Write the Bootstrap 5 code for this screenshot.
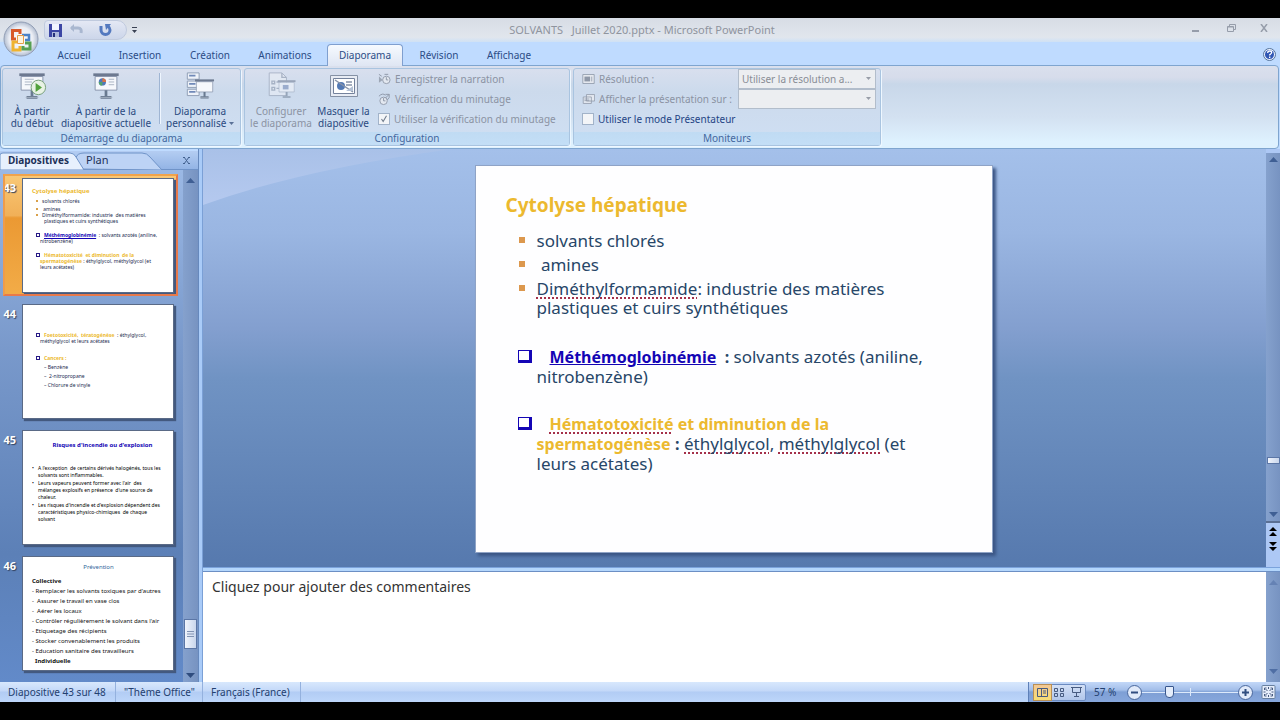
<!DOCTYPE html>
<html lang="fr">
<head>
<meta charset="utf-8">
<meta name="viewport" content="width=device-width, initial-scale=1">
<title>SOLVANTS Juillet 2020.pptx - Microsoft PowerPoint</title>
<link href="https://cdn.jsdelivr.net/npm/bootstrap@5.3.0/dist/css/bootstrap.min.css" rel="stylesheet">
<style>
  :root { --ink: #2a4a80; --dim: #8b93a3; --line: #86a9d3; }
  body { background: #000; font: 10px/12px "Noto Sans", "Open Sans", sans-serif; color: var(--ink); padding: 18px 0; overflow: hidden; }
  button { font: inherit; color: inherit; background: none; border: 0; padding: 0; }
  svg { display: block; flex: none; }
  a { color: inherit; text-decoration: none; }
  ul { list-style: none; margin: 0; padding: 0; }

  /* window frame */
  .window { background: #bfdbff; min-height: 0; }
  .titlebar { height: 24px; background: linear-gradient(#d7dce5, #e1e6ed 80%, #cfe1f5); color: #8f949e; font-size: 11px; padding-left: 44px; }
  .quick { width: 83px; height: 20px; border: 1px solid #c0cade; border-radius: 4px 10px 10px 4px; background: linear-gradient(#e4e8f4, #ccd6ea); }
  .orb { left: 3px; top: 3px; z-index: 2; }
  .tabstrip { height: 23px; padding: 2px 4px 0 41px; }
  .tabstrip .nav-link { color: #2b4c86; padding: 5px 0 0; text-align: center; height: 21px; border: 0; border-radius: 4px 4px 0 0; }
  .tabstrip .nav-link.active { background: linear-gradient(#f6faff, #dfe6f3); border: 1px solid #7f9fcf; border-bottom: 0; padding-top: 4px; color: #2b4c86; height: 22px; margin-bottom: -1px; position: relative; }

  /* ribbon */
  .ribbon { height: 84px; border: 1px solid #7fa5cf; border-radius: 4px; background: linear-gradient(#dae0ed, #d6dceb 14%, #c8d7e9 22%, #d3e1f1 62%, #def1fe 92%); padding: 2px 0 2px 1px; gap: 3px; margin-right: 1px; }
  .ribbon-group { border: 1px solid #a9c4e0; border-radius: 3px; box-shadow: 1px 1px 0 #eef7ff; background: linear-gradient(#d8dfee, #ccdaec 30%, #cfdff3); }
  .ribbon-group > footer { background: linear-gradient(#c0dbf3, #c3def6); text-align: center; height: 13px; line-height: 13px; color: #44689f; }
  .tool { display: flex; flex-direction: column; align-items: center; padding-top: 3px; white-space: nowrap; }
  .tool svg { margin-bottom: 4px; }
  .tool:disabled, .faded { color: var(--dim); }
  .tool:disabled svg { opacity: .55; }
  .rule { width: 1px; background: #9fb5d3; box-shadow: 1px 0 0 #eff6ff; margin: 4px 0 8px; }
  .option { height: 20px; display: flex; align-items: center; gap: 4px; white-space: nowrap; }
  .form-check-input { width: 12px; height: 12px; margin: 0; border: 1px solid #a2b3c9; background-color: #f3f5f8; }
  .form-check-input[type=checkbox] { border-radius: 0; }
  .form-check-input:disabled { opacity: 1; }
  .form-check-input:checked { background-color: #f3f5f8; border-color: #a2b3c9; background-image: url("data:image/svg+xml,%3csvg xmlns='http://www.w3.org/2000/svg' viewBox='0 0 12 12'%3e%3cpath d='M3 6l2 3 4-7' fill='none' stroke='%23707c8c' stroke-width='1.3'/%3e%3c/svg%3e"); }
  .form-check-label { color: #1f4485; }
  .form-check-input:disabled ~ .form-check-label { color: var(--dim); opacity: 1; }
  .form-select { width: 138px; height: 20px; border: 1px solid #b2bdcb; border-radius: 0; font-size: 10px; line-height: 12px; padding: 0 12px 0 3px; color: #898d96; background-position: right 3px center; background-size: 7px 5px;
    background-image: url("data:image/svg+xml,%3csvg xmlns='http://www.w3.org/2000/svg' viewBox='0 0 7 5'%3e%3cpath d='M1 0h5L3.500 3z' fill='%23989da8'/%3e%3c/svg%3e"); }
  .form-select:disabled { background-color: #eceef1; color: #898d96; }

  /* slide list */
  .side { width: 198px; background: #98b9e7; margin-top: 2px; }
  .side-tabs { height: 19px; background: linear-gradient(#b4cdf2, #93b4e5); color: #1d3158; font-size: 10px; border-bottom: 1px solid #6f93c8; }
  .thumbs { background: linear-gradient(#9bb8e4, #7999cb 35%, #5c80b7 75%, #628ac9); }
  .thumb { height: 126px; padding: 8px 0 0; color: #fff; font: bold 11px/12px "Noto Sans", sans-serif; display: flex; gap: 6px; align-items: flex-start; }
  .thumb > span { width: 16px; text-shadow: 1px 1px 1px #33415d; padding-top: 4px; text-align: right; }
  .thumb.current { background: linear-gradient(#f9c977, #f1b058 34%, #eb9933 36%, #f2ac48) no-repeat 3px 4px / 174px 122px; }
  .thumb.current::after { content: ""; position: absolute; left: 3px; top: 4px; width: 175px; height: 122px; border: 2px solid #e8794a; border-top-color: #f0a34c; border-left-color: #ef9c4a; }
  .page { width: 152px; height: 115px; background: #fff; border: 1px solid #5a6a86; box-shadow: 2px 2px 1px #43597f; color: #1c2c50; font: 5px/6px "Noto Sans", sans-serif; white-space: nowrap; overflow: hidden; padding: 9px 0 0 9px; }
  .page p { margin: 0; }
  .page .heading { font-size: 6px; }
  .page .step { padding-top: 2px; }
  .page .loose { line-height: 9px; }
  .page .prose { line-height: 7px; padding-top: 16px; color: #000; }
  .page .prose p { padding-left: 6px; }
  .page .prose .point { padding: 1px 0 0; }
  .page .point::before { content: "•"; display: inline-block; width: 6px; }
  .page.dense { padding-top: 5px; font-size: 6px; line-height: 10px; color: #111; }
  .gold { color: #ecb92f; font-weight: bold; }
  .blue { color: #1405b5; font-weight: bold; }
  .dot { display: inline-block; width: 2px; height: 2px; margin: 0 4px 1px 0; background: #d9a04a; }
  .box { display: inline-block; width: 4px; height: 4px; border: 1px solid #281a86; margin-right: 4px; }

  .track { background: linear-gradient(90deg, #85a1cd, #7793c1); display: flex; flex-direction: column; align-items: center; }
  .grip { background: linear-gradient(90deg, #f0f4fc, #c9d6ec); border: 1px solid #5b76a6; }
  .splitter { width: 5px; background: linear-gradient(90deg, #6689bd 0 1px, #a9cbf8 1px 4px, #7ba0d6 4px); }

  /* editing area */
  .stage { background: linear-gradient(#a4c0ea, #9ab6e2 20%, #839fcf 43%, #7093c3 55%, #5679ae); padding: 5px 2px 3px 0; }
  .glow { left: 0; top: 0; }
  .slide { width: 518px; height: 388px; background: #fefeff; box-shadow: 3px 3px 3px #3b5685; border: 1px solid #8fa3c6; padding: 28px 40px 0 30px; color: #274668; font-size: 17px; line-height: 19px; white-space: nowrap; position: relative; }
  .slide h1 { font-size: 19px; line-height: 22px; margin: 0 0 15px; }
  .slide li { position: relative; padding-left: 31px; margin-bottom: 5px; }
  .slide li.last-square { margin-bottom: 30px; }
  .slide b { font-size: 16px; }
  .slide .square::before { content: ""; position: absolute; left: 13px; top: 6px; width: 6px; height: 6px; background: #dc984e; }
  .slide li.boxed { margin-bottom: 28px; }
  .slide .roomy { line-height: 20px; }
  .slide .boxed::before { content: ""; position: absolute; left: 12px; top: 3px; width: 14px; height: 13px; border: solid #1405b5; border-width: 1px 3px 3px 1px; }
  .indent { padding-left: 13px; }
  .typo { text-decoration: underline dotted #a4304a 2px; text-underline-offset: 2px; text-decoration-skip-ink: none; }
  .hsplit { height: 5px; background: linear-gradient(#7ba3dc 0 1px, #b3d6fc 1px 4px, #6c8fc4 4px); }
  .notes { height: 110px; background: #fff; }
  .notes textarea { border: 0; resize: none; font: 14px/18px "Noto Sans", sans-serif; color: #333; padding: 6px 9px; outline: 0; background: #fff; }
  .notes textarea::placeholder { color: #333; opacity: 1; }

  /* status bar */
  .status { height: 20px; background: linear-gradient(#d8e8fd, #c3d8f8 45%, #b2ccf4 50%, #bdd6fa); color: #23406f; }
  .status > span { border-right: 1px solid #94b1de; line-height: 20px; }
  .status-right { background: linear-gradient(#c3d8f8, #a3bee9 40%, #7e9fd5 50%, #87a7dc); border-left: 1px solid #5e80b8; }
  .views { border: 1px solid #6c8bc0; border-radius: 2px; background: linear-gradient(#d3e0f6, #b1c6ea); height: 17px; }
  .views button { width: 17px; height: 15px; display: grid; place-items: center; }
  .views .on { background: linear-gradient(#f3c794, #f7dd74); outline: 1px solid #b98f55; }
  .zoom { appearance: none; width: 96px; height: 14px; margin: 0; background: linear-gradient(#dce9fb, #dce9fb) center / 100% 1px no-repeat, linear-gradient(#dce9fb, #dce9fb) 50% center / 1px 8px no-repeat; }
  .zoom::-webkit-slider-thumb { appearance: none; width: 9px; height: 12px; background: #e4edfb; border: 1px solid #38568d; border-radius: 1px 1px 4px 4px; }
</style>
</head>
<body class="vh-100 d-flex flex-column">
<svg width="0" height="0" class="position-absolute">
  <defs>
    <g id="board"><path d="M4 5h24v15H4z" fill="#f6f8fc" stroke="#8390a8"/><path d="M2 1.500h28v3H2z" fill="#6d7990"/><path d="M16 20v7M10 28h12" stroke="#697a90" stroke-width="3"/><path d="M9 28h14" stroke="#a8b4c4"/></g>
    <g id="mini"><path d="M1 1.500h14v11H1z" fill="#e8ebf1" stroke="#8d97a7"/><path d="M3 4h7v6H3z" fill="#8f98a8"/><path d="M12 4v6" stroke="#8f98a8"/></g>
    <path id="up" d="M0 5h9L4.500 0z"/>
    <path id="down" d="M0 0h9L4.500 5z"/>
  </defs>
</svg>

<div class="window flex-grow-1 d-flex flex-column position-relative">
  <button class="orb position-absolute" aria-label="Bouton Office">
    <svg width="36" height="36" viewBox="0 0 36 36"><defs><radialGradient id="orbfill"><stop offset="0" stop-color="#fff"/><stop offset=".7" stop-color="#eaedf4"/><stop offset="1" stop-color="#b2bdd0"/></radialGradient></defs>
      <circle cx="18" cy="18" r="17" fill="url(#orbfill)" stroke="#929eb5"/>
      <g fill="none" stroke-width="3"><path d="M13 18H9.500V9.500H17V13" stroke="#d8592a"/><path d="M19 14h7v5h-4" stroke="#4b82c8" stroke-width="2.500"/><path d="M14 21h-4v8h7v-4" stroke="#efb32f"/><path d="M22 22h5v6h-7v-3" stroke="#57a053"/></g>
      <path d="M14.500 14.500h6v8h-6z" fill="#fff5dd" stroke="#e79e4a"/></svg>
  </button>

  <header class="titlebar d-flex align-items-center position-relative">
    <div class="quick d-flex align-items-center ps-1">
      <button aria-label="Enregistrer" class="ms-0 me-2"><svg width="13" height="13" viewBox="0 0 13 13"><path d="M0 0h13v13H0z" fill="#3c46a4"/><path d="M3 0h7v6H3z" fill="#f1f5ff"/><path d="M3 8h7v5H3z" fill="#aeb9dc"/><path d="M4 9h2v4H4z" fill="#263079"/></svg></button>
      <button aria-label="Annuler" class="me-3"><svg width="13" height="12" viewBox="0 0 13 12"><path d="M1 4h7q4 0 3 5" fill="none" stroke="#a9b7d0" stroke-width="3"/><path d="M0 4l4-4v8z" fill="#a9b7d0"/></svg></button>
      <button aria-label="Répéter"><svg width="13" height="13" viewBox="0 0 13 13"><path d="M2 2v4a4.500 4.500 0 0 0 9 0q0-2-2-4" fill="none" stroke="#5479bf" stroke-width="3"/><path d="M6 0h6L7 6z" fill="#5479bf"/></svg></button>
    </div>
    <button class="ms-1" aria-label="Personnaliser la barre"><svg width="7" height="7" viewBox="0 0 7 7"><path d="M1 0h5v1H1zM1 3h5L3.500 6z" fill="#3a4254"/></svg></button>
    <div class="position-absolute start-0 end-0 text-center pe-none ps-1" style="white-space:pre">SOLVANTS   Juillet 2020.pptx - Microsoft PowerPoint</div>
    <div class="ms-auto d-flex align-items-center gap-4 position-relative mb-1 me-2 pe-1">
      <button aria-label="Réduire" class="me-1"><svg width="7" height="8"><path d="M0 6h7v2H0z" fill="#969daa"/></svg></button>
      <button aria-label="Restaurer"><svg width="9" height="8"><path d="M2.500 2V.5h6v5H7M.5 2.500h6v5h-6zM.5 3h6" fill="none" stroke="#969daa"/></svg></button>
      <button aria-label="Fermer"><svg width="8" height="8"><path d="M1 0l6 8M7 0L1 8" stroke="#969daa" stroke-width="1.500"/></svg></button>
    </div>
  </header>

  <nav class="tabstrip d-flex align-items-start">
    <ul class="nav flex-nowrap">
      <li style="width:66px"><a class="nav-link" href="#">Accueil</a></li>
      <li style="width:66px"><a class="nav-link" href="#">Insertion</a></li>
      <li style="width:74px"><a class="nav-link" href="#">Création</a></li>
      <li style="width:76px"><a class="nav-link" href="#">Animations</a></li>
      <li class="px-1" style="width:84px"><a class="nav-link active" href="#">Diaporama</a></li>
      <li style="width:64px"><a class="nav-link" href="#">Révision</a></li>
      <li style="width:76px"><a class="nav-link" href="#">Affichage</a></li>
    </ul>
    <button class="ms-auto mt-1" aria-label="Aide"><svg width="13" height="13" viewBox="0 0 13 13"><circle cx="6.500" cy="6.500" r="6" fill="#eaf1ff" stroke="#55749c"/><circle cx="6.500" cy="6.500" r="4.500" fill="#3157b4"/><path d="M4.700 5q0-2 2-2t2 1.600q0 1-2 2.200v.8M6.700 8.600v1.300" fill="none" stroke="#fff" stroke-width="1.300"/></svg></button>
  </nav>

  <section class="ribbon d-flex">
    <div class="ribbon-group d-flex flex-column" style="width:239px">
      <div class="d-flex flex-grow-1 ps-1">
        <button class="tool" style="width:50px"><svg width="30" height="29" viewBox="0 0 32 32"><use href="#board"/><path d="M8 8h10M8 11h8M8 14h7" stroke="#a4afc0"/><circle cx="23" cy="17" r="8" fill="#e8f2e4" stroke="#6f9a73"/><path d="M20 12l7 5-7 5z" fill="#52a23c"/></svg>À partir<br>du début</button>
        <button class="tool" style="width:98px"><svg width="30" height="29" viewBox="0 0 32 32"><use href="#board"/><circle cx="12" cy="11" r="4" fill="#4f78ba"/><path d="M12 11V7a4 4 0 0 1 4 4z" fill="#d97345"/><path d="M12 11H8a4 4 0 0 0 4 4z" fill="#53a36b"/><path d="M19 8h6M19 11h6M19 14h6" stroke="#a4afc0"/></svg>À partir de la<br>diapositive actuelle</button>
        <div class="rule ms-1"></div>
        <button class="tool" style="width:80px"><svg width="30" height="29" viewBox="0 0 32 32"><path d="M2 1h13v7H2zM2 10h13v7H2zM2 19h13v7H2z" fill="#eef2f9" stroke="#8b99b1"/><path d="M4 3h7v2H4zM4 12h7v2H4zM4 21h7v2H4z" fill="#7089b8"/><g transform="translate(9 7) scale(.75)"><use href="#board"/></g></svg>Diaporama<span>personnalisé <svg class="d-inline m-0" width="5" height="4"><path d="M0 0h5L2.500 3z" fill="#5a7197"/></svg></span></button>
      </div>
      <footer>Démarrage du diaporama</footer>
    </div>

    <div class="ribbon-group d-flex flex-column" style="width:326px">
      <div class="d-flex flex-grow-1">
        <button class="tool" style="width:72px" disabled><svg width="30" height="29" viewBox="0 0 32 32"><path d="M3 1h14l5 5v20H3z" fill="#eef1f7" stroke="#8591a6"/><path d="M17 1v5h5M6 10h3v3H6zM6 17h3v3H6zM11 11h5M11 18h5" fill="none" stroke="#8591a6" stroke-width="1.500"/><g transform="translate(11 8) scale(.7)"><use href="#board"/><path d="M10 9h9v7h-9z" fill="#7187b4"/></g></svg>Configurer<br>le diaporama</button>
        <button class="tool" style="width:53px"><svg width="30" height="29" viewBox="0 0 30 29"><path d="M1.500 3.500h27v21h-27z" fill="#e8ecf4" stroke="#8591a5"/><path d="M4.500 6.500h21v15h-21z" fill="#fff" stroke="#74829c"/><circle cx="12" cy="14" r="4" fill="#547ab5"/><path d="M17 10h6M17 13h6M6 8l18 12" stroke="#8793a9" stroke-width="1.500"/><path d="M17 19l7-5v5z" fill="#b4c1d5"/></svg>Masquer la<br>diapositive</button>
        <div class="ps-2">
          <button class="option faded gap-1" disabled><svg width="13" height="14" viewBox="0 0 14 14"><path d="M1 4l4 4-4 3z" fill="#9da6b5"/><circle cx="9" cy="8" r="4" fill="#e3e8f0" stroke="#929bab"/><path d="M9 5v3h2M7 2h4M1 2l3 2" fill="none" stroke="#8b95a5"/></svg>Enregistrer la narration</button>
          <button class="option faded gap-1" disabled><svg width="13" height="14" viewBox="0 0 14 14"><circle cx="6" cy="9" r="4" fill="#e3e8f0" stroke="#929bab"/><path d="M6 6v3h2M1 4q4-4 7-1M8 6l4-4M10 8q3-2 2-6H8" fill="none" stroke="#8b95a5"/></svg>Vérification du minutage</button>
          <div class="option"><input class="form-check-input" type="checkbox" id="timing" checked disabled><label class="form-check-label ms-0" for="timing">Utiliser la vérification du minutage</label></div>
        </div>
      </div>
      <footer>Configuration</footer>
    </div>

    <div class="ribbon-group d-flex flex-column" style="width:308px">
      <div class="flex-grow-1 ps-1 pe-1 me-n1">
        <div class="option faded ps-1"><svg width="13" height="14" viewBox="0 0 16 14"><use href="#mini"/></svg><label for="resolution">Résolution :</label><select class="form-select ms-auto" id="resolution" disabled><option>Utiliser la résolution a...</option></select></div>
        <div class="option faded ps-1"><svg width="13" height="14" viewBox="0 0 16 14"><path d="M5.500 1.500h10v8h-10zM1.500 4.500h10v8h-10z" fill="#e3e8f0" stroke="#929bab"/><path d="M3 7h6M3 9h6" stroke="#929bab"/></svg><label for="monitor">Afficher la présentation sur :</label><select class="form-select ms-auto" id="monitor" disabled><option></option></select></div>
        <div class="option ps-1"><input class="form-check-input" type="checkbox" id="presenter"><label class="form-check-label" for="presenter">Utiliser le mode Présentateur</label></div>
      </div>
      <footer>Moniteurs</footer>
    </div>
  </section>

  <main class="d-flex flex-grow-1" style="min-height:0">
    <aside class="side d-flex flex-column flex-shrink-0">
      <div class="side-tabs position-relative d-flex align-items-center flex-shrink-0">
        <svg class="position-absolute start-0 top-0" width="170" height="19"><path d="M80 18l-4-11q1-5 8-5h58q5 0 8 4l12 13z" fill="#bdd3f5" stroke="#6f93c8"/><path d="M0 19V4q0-2 3-2h67q4 0 6 4l8 13z" fill="#e7f0fd" stroke="#6f93c8"/></svg>
        <a href="#" class="position-relative fw-bold ps-2" style="width:86px">Diapositives</a><a href="#" class="position-relative" style="font-size:11px">Plan</a>
        <button class="ms-auto me-2" aria-label="Fermer le volet"><svg width="7" height="7"><path d="M1 0l5 7M6 0L1 7M0 .5h2M5 .5h2M0 6.500h2M5 6.500h2" stroke="#42618f"/></svg></button>
      </div>
      <div class="d-flex flex-grow-1 overflow-hidden">
        <div class="thumbs flex-grow-1 overflow-hidden">
          <article class="thumb current position-relative"><span>43</span>
            <div class="page">
              <p class="gold heading">Cytolyse hépatique</p>
              <p class="ps-1 mt-1"><i class="dot"></i>solvants chlorés</p>
              <p class="ps-1 step"><i class="dot"></i>&nbsp;amines</p>
              <p class="ps-1"><i class="dot"></i>Diméthylformamide: industrie&nbsp; des matières</p>
              <p class="ms-2 ps-1">plastiques et cuirs synthétiques</p>
              <p class="ps-1 mt-2"><i class="box"></i><u class="blue">Méthémoglobinémie</u>&nbsp; : solvants azotés (aniline,</p>
              <p class="ms-2">nitrobenzène)</p>
              <p class="ps-1 mt-2"><i class="box"></i><span class="gold">Hématotoxicité&nbsp; et diminution&nbsp; de la</span></p>
              <p class="ms-2"><span class="gold">spermatogénèse</span> : éthylglycol, méthylglycol (et</p>
              <p class="ms-2">leurs acétates)</p>
            </div>
          </article>
          <article class="thumb"><span>44</span>
            <div class="page">
              <p class="step mt-3"><i class="box ms-1"></i><span class="gold">Foetotoxicité,&nbsp; tératogénèse</span>&nbsp; : éthylglycol,</p>
              <p class="ms-2">méthylglycol et leurs acétates</p>
              <div class="loose mt-2 step"><p><i class="box ms-1"></i><span class="gold">Cancers :</span></p>
              <div class="ps-2 ms-1"><p>– Benzène</p><p>–&nbsp; 2-nitropropane</p><p>– Chlorure de vinyle</p></div></div>
            </div>
          </article>
          <article class="thumb"><span>45</span>
            <div class="page">
              <p class="blue text-center heading step">Risques d'incendie ou d'explosion</p>
              <div class="prose"><p class="point">A l'exception&nbsp; de certains dérivés halogénés, tous les</p><p>solvants sont inflammables.</p><p class="point">Leurs vapeurs peuvent former avec l'air&nbsp; des</p><p>mélanges explosifs en présence&nbsp; d'une source de</p><p>chaleur.</p><p class="point">Les risques d'incendie et d'explosion dépendent des</p><p>caractéristiques physico-chimiques&nbsp; de chaque</p><p>solvant</p></div>
            </div>
          </article>
          <article class="thumb"><span>46</span>
            <div class="page dense">
              <p class="text-center pe-2" style="color:#33679b">Prévention</p>
              <p class="pt-1 fw-bold">Collective</p><p>- Remplacer les solvants toxiques par d'autres</p><p>-&nbsp; Assurer le travail en vase clos</p><p>-&nbsp; Aérer les locaux</p><p>- Contrôler régulièrement le solvant dans l'air</p><p>- Etiquetage des récipients</p><p>- Stocker convenablement les produits</p><p>- Education sanitaire des travailleurs</p><p class="fw-bold">&nbsp; Individuelle</p>
            </div>
          </article>
        </div>
        <div class="track flex-shrink-0 pt-2 pb-1" style="width:15px">
          <svg width="9" height="5"><use href="#up" fill="#3f5f94"/></svg>
          <div class="grip mt-auto mb-4 d-grid" style="width:13px;height:30px;place-items:center"><svg width="7" height="6"><path d="M0 .5h7M0 3h7M0 5.500h7" stroke="#8293b3"/></svg></div>
          <svg width="9" height="5"><use href="#down" fill="#2f4c7e"/></svg>
        </div>
      </div>
    </aside>
    <div class="splitter flex-shrink-0"></div>

    <section class="flex-grow-1 d-flex flex-column" style="min-width:0">
      <div class="d-flex flex-grow-1">
        <div class="stage flex-grow-1 position-relative d-flex align-items-center justify-content-center">
          <svg class="glow position-absolute" width="270" height="90" viewBox="0 0 270 90"><defs><linearGradient id="sheen" x2="0" y2="1"><stop stop-color="#a9c1e8"/><stop offset="1" stop-color="#b5c9ef"/></linearGradient></defs><path d="M0 0h250Q100 20 0 56z" fill="url(#sheen)"/></svg>
          <article class="slide">
            <h1 class="gold">Cytolyse hépatique</h1>
            <ul>
              <li class="square">solvants chlorés</li>
              <li class="square">&nbsp;amines</li>
              <li class="square last-square"><span class="typo">Diméthylformamide</span>: industrie des matières<br>plastiques et cuirs synthétiques</li>
              <li class="boxed"><span class="indent"><b><u class="blue">Méthémoglobinémie</u>&nbsp; :</b> solvants azotés (aniline,</span><br>nitrobenzène)</li>
              <li class="boxed roomy"><b class="gold indent"><span class="typo">Hématotoxicité</span> et diminution de la</b><br><b class="gold">spermatogénèse</b> <b>:</b> <span class="typo">éthylglycol</span>, <span class="typo">méthylglycol</span> (et<br>leurs acétates)</li>
            </ul>
          </article>
        </div>
        <div class="d-flex flex-column flex-shrink-0" style="width:14px;background:#adc8f5">
          <div class="track flex-grow-1 py-1 mt-1">
            <svg width="9" height="5"><use href="#up" fill="#3f5f94"/></svg>
            <div class="grip mt-auto mb-5" style="width:13px;height:7px"></div>
            <svg width="9" height="5"><use href="#down" fill="#3f5f94"/></svg>
          </div>
          <div class="d-flex flex-column align-items-center pt-1" style="height:46px;border-top:2px solid #5a6f93">
            <button aria-label="Diapositive précédente"><svg width="8" height="10"><path d="M0 4h8L4 0zM0 9h8L4 5z"/></svg></button>
            <button aria-label="Diapositive suivante" class="mt-1"><svg width="8" height="10"><path d="M0 1h8L4 5zM0 6h8l-4 4z"/></svg></button>
          </div>
        </div>
      </div>
      <div class="hsplit flex-shrink-0"></div>
      <div class="notes d-flex flex-shrink-0">
        <textarea class="flex-grow-1" aria-label="Commentaires" placeholder="Cliquez pour ajouter des commentaires"></textarea>
        <div class="track justify-content-between py-2" style="width:14px"><svg width="9" height="5"><use href="#up" fill="#6582b4"/></svg><svg width="9" height="5"><use href="#down" fill="#4f6ea4"/></svg></div>
      </div>
    </section>
  </main>

  <footer class="status d-flex flex-shrink-0">
    <span class="ps-2 text-nowrap" style="width:116px">Diapositive 43 sur 48</span>
    <span class="ps-2 text-nowrap" style="width:87px">"Thème Office"</span>
    <span class="ps-2 text-nowrap" style="width:98px">Français (France)</span>
    <div class="status-right ms-auto d-flex align-items-center ps-1 pe-1" style="width:252px">
      <div class="views d-flex" role="group">
        <button class="on" aria-label="Normal"><svg width="11" height="9"><path d="M.5.500h10v8H.5zM4.500 0v8M6 3h3M6 5h3" fill="none" stroke="#475b80"/></svg></button>
        <button aria-label="Trieuse"><svg width="11" height="9"><path d="M.5.500h3v3h-3zM6.500.500h3v3h-3zM.5 5.500h3v3h-3zM6.500 5.500h3v3h-3z" fill="none" stroke="#475b80"/></svg></button>
        <button aria-label="Diaporama"><svg width="11" height="10"><path d="M0 .5h11M1.500 1v4.500h8V1M5.500 6v3M3 9.500h5" fill="none" stroke="#475b80"/></svg></button>
      </div>
      <button class="ms-2 me-auto text-nowrap">57 %</button>
      <button aria-label="Zoom arrière"><svg width="15" height="15"><circle cx="7.500" cy="7.500" r="7" fill="#e1eafa" stroke="#48669c"/><path d="M4 7.500h7" stroke="#304d80" stroke-width="2"/></svg></button>
      <input class="zoom" type="range" min="10" max="400" value="112" aria-label="Zoom">
      <button aria-label="Zoom avant"><svg width="15" height="15"><circle cx="7.500" cy="7.500" r="7" fill="#e1eafa" stroke="#48669c"/><path d="M4 7.500h7M7.500 4v7" stroke="#304d80" stroke-width="2"/></svg></button>
      <button class="ms-2" aria-label="Ajuster"><svg width="15" height="14" viewBox="0 0 14 14"><rect x=".5" y=".5" width="13" height="13" rx="1" fill="#e6eefb" stroke="#68809f"/><path d="M3 5V3h2M9 3h2v2M11 9v2H9M5 11H3V9M4 4l2 2M10 4L8 6M4 10l2-2M10 10L8 8M7 2v2M7 10v2M2 7h2M10 7h2" fill="none" stroke="#475b80"/></svg></button>
    </div>
  </footer>
</div>
<script src="https://cdn.jsdelivr.net/npm/bootstrap@5.3.0/dist/js/bootstrap.bundle.min.js"></script>
</body>
</html>
